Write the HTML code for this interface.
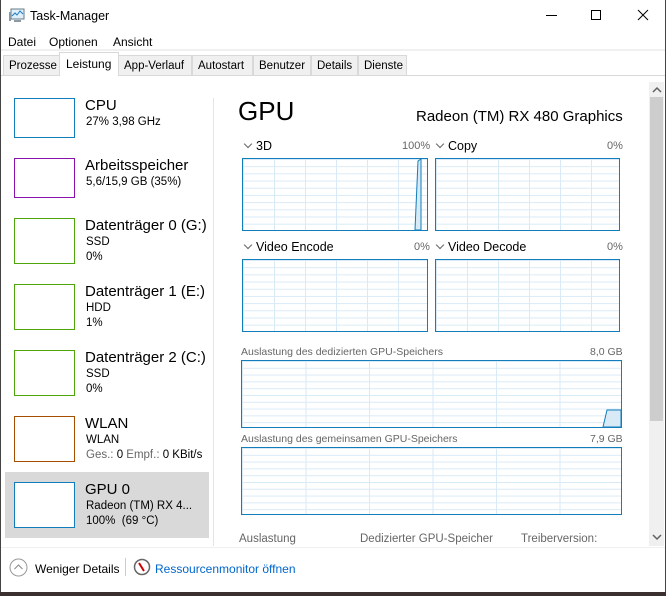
<!DOCTYPE html>
<html><head><meta charset="utf-8"><style>
*{margin:0;padding:0;box-sizing:border-box}
body{width:666px;height:596px;background:#fff;font-family:"Liberation Sans",sans-serif;font-size:12px;color:#000;position:relative;overflow:hidden}
.a{position:absolute;white-space:nowrap}
.tab{position:absolute;top:55px;height:20px;background:#f0f0f0;border:1px solid #d9d9d9;border-bottom:none;font-size:11.5px;padding:4px 0 0 5px;overflow:hidden}
.th{position:absolute;left:14px;width:61px;height:40px;background:#fff}
.nm{font-size:15px;left:85px}
.sb{font-size:11.5px;left:86px}
.g{position:absolute;border:1px solid #117dbb;
background-color:#fff;
background-image:linear-gradient(#d9eaf7 1px,transparent 1px),linear-gradient(90deg,#d9eaf7 1px,transparent 1px)}
.lbl{font-size:12.5px}
.pct{font-size:11px;color:#666}
.chev{position:absolute;width:6px;height:6px;border-right:1px solid #666;border-bottom:1px solid #666;transform:rotate(45deg)}
</style></head><body>
<svg class="a" style="left:8px;top:8px" width="18" height="16" viewBox="0 0 18 16"><rect x="3" y="1" width="13" height="10" fill="#dff0fa" stroke="#6a7b86"/><polyline points="4,8 7,5 9,7 12,3 15,6" fill="none" stroke="#1e7bc1"/><rect x="1" y="4" width="2" height="9" fill="#8a9aa4"/><rect x="6" y="12" width="7" height="2" fill="#8a9aa4"/></svg>
<div class="a" style="left:30px;top:9px;font-size:12.5px">Task-Manager</div>
<div class="a" style="left:546px;top:15px;width:11px;height:1px;background:#000"></div>
<div class="a" style="left:591px;top:10px;width:10px;height:10px;border:1px solid #000"></div>
<svg class="a" style="left:637px;top:9px" width="12" height="12"><path d="M1 1L11 11M11 1L1 11" stroke="#000" stroke-width="1"/></svg>
<div class="a" style="left:8px;top:35px">Datei</div>
<div class="a" style="left:49px;top:35px">Optionen</div>
<div class="a" style="left:113px;top:35px">Ansicht</div>
<div class="a" style="left:0;top:49px;width:666px;height:2px;background:#f0f0f0"></div>
<div class="a" style="left:0;top:51px;width:666px;height:24px;background:#fff"></div>
<div class="tab" style="left:3px;width:57px">Prozesse</div>
<div class="tab" style="left:118px;width:74px">App-Verlauf</div>
<div class="tab" style="left:192px;width:61px">Autostart</div>
<div class="tab" style="left:253px;width:58px">Benutzer</div>
<div class="tab" style="left:311px;width:47px">Details</div>
<div class="tab" style="left:358px;width:49px">Dienste</div>
<div class="a" style="left:59px;top:52px;width:60px;height:24px;background:#fff;border:1px solid #d9d9d9;border-bottom:none;padding:4px 0 0 6px">Leistung</div>
<div class="a" style="left:0;top:75px;width:59px;height:1px;background:#d9d9d9"></div>
<div class="a" style="left:119px;top:75px;width:547px;height:1px;background:#d9d9d9"></div>
<div class="a" style="left:213px;top:98px;width:1px;height:448px;background:#e5e5e5"></div>
<div class="th" style="top:98px;border:1px solid #117dbb"></div>
<div class="a nm" style="top:97px">CPU</div>
<div class="a sb" style="top:116px">27% 3,98 GHz</div>
<div class="th" style="top:158px;border:1px solid #8b12ae"></div>
<div class="a nm" style="top:157px">Arbeitsspeicher</div>
<div class="a sb" style="top:176px">5,6/15,9 GB (35%)</div>
<div class="th" style="top:218px;height:46px;border:1px solid #4da60c"></div>
<div class="a nm" style="top:217px">Datenträger 0 (G:)</div>
<div class="a sb" style="top:236px">SSD</div><div class="a sb" style="top:251px">0%</div>
<div class="th" style="top:284px;height:46px;border:1px solid #4da60c"></div>
<div class="a nm" style="top:283px">Datenträger 1 (E:)</div>
<div class="a sb" style="top:302px">HDD</div><div class="a sb" style="top:317px">1%</div>
<div class="th" style="top:350px;height:46px;border:1px solid #4da60c"></div>
<div class="a nm" style="top:349px">Datenträger 2 (C:)</div>
<div class="a sb" style="top:368px">SSD</div><div class="a sb" style="top:383px">0%</div>
<div class="th" style="top:416px;height:46px;border:1px solid #a74f01"></div>
<div class="a nm" style="top:415px">WLAN</div>
<div class="a sb" style="top:434px">WLAN</div>
<div class="a sb" style="top:449px;color:#666">Ges.: <span style="color:#000">0</span> Empf.: <span style="color:#000">0 KBit/s</span></div>
<div class="a" style="left:5px;top:472px;width:204px;height:66px;background:#d9d9d9"></div>
<div class="th" style="top:482px;height:46px;border:1px solid #117dbb"></div>
<div class="a nm" style="top:481px">GPU 0</div>
<div class="a sb" style="top:500px">Radeon (TM) RX 4...</div>
<div class="a sb" style="top:515px">100%&nbsp; (69 °C)</div>
<div class="a" style="left:238px;top:96px;font-size:26px">GPU</div>
<div class="a" style="left:416px;top:108px;font-size:15px">Radeon (TM) RX 480 Graphics</div>
<div class="chev" style="left:245px;top:141px"></div>
<div class="a lbl" style="left:256px;top:139px">3D</div>
<div class="a pct" style="left:402px;top:140px">100%</div>
<div class="chev" style="left:437px;top:141px"></div>
<div class="a lbl" style="left:448px;top:139px">Copy</div>
<div class="a pct" style="left:607px;top:140px">0%</div>
<div class="g" style="left:242px;top:158px;width:186px;height:73px;background-size:31px 7.2px"></div>
<svg class="a" style="left:242px;top:158px" width="186" height="73"><path d="M173 72L176 3L179 1L179 72Z" fill="#d9eaf7" stroke="#117dbb"/></svg>
<div class="g" style="left:435px;top:158px;width:185px;height:73px;background-size:31px 7.2px"></div>
<div class="chev" style="left:245px;top:242px"></div>
<div class="a lbl" style="left:256px;top:240px">Video Encode</div>
<div class="a pct" style="left:414px;top:241px">0%</div>
<div class="chev" style="left:437px;top:242px"></div>
<div class="a lbl" style="left:448px;top:240px">Video Decode</div>
<div class="a pct" style="left:607px;top:241px">0%</div>
<div class="g" style="left:242px;top:259px;width:186px;height:73px;background-size:31px 7.2px"></div>
<div class="g" style="left:435px;top:259px;width:185px;height:73px;background-size:31px 7.2px"></div>
<div class="a" style="left:241px;top:346px;font-size:10.5px;color:#666">Auslastung des dedizierten GPU-Speichers</div>
<div class="a" style="left:590px;top:346px;font-size:10.5px;color:#666">8,0 GB</div>
<div class="g" style="left:241px;top:360px;width:381px;height:68px;background-size:63.5px 6.8px"></div>
<svg class="a" style="left:241px;top:360px" width="381" height="68"><path d="M362 67L366 50L380 50L380 67Z" fill="#d9eaf7" stroke="#117dbb"/></svg>
<div class="a" style="left:241px;top:433px;font-size:10.5px;color:#666">Auslastung des gemeinsamen GPU-Speichers</div>
<div class="a" style="left:590px;top:433px;font-size:10.5px;color:#666">7,9 GB</div>
<div class="g" style="left:241px;top:447px;width:381px;height:68px;background-size:63.5px 6.8px"></div>
<div class="a" style="left:239px;top:533px;font-size:11.5px;color:#666">Auslastung</div>
<div class="a" style="left:360px;top:533px;font-size:11.5px;color:#666">Dedizierter GPU-Speicher</div>
<div class="a" style="left:521px;top:533px;font-size:11.5px;color:#666">Treiberversion:</div>
<div class="a" style="left:649px;top:82px;width:15px;height:464px;background:#f0f0f0"></div>
<div class="a" style="left:650px;top:97px;width:13px;height:324px;background:#cdcdcd"></div>
<svg class="a" style="left:651px;top:85px" width="12" height="10"><path d="M2 7L6 3L10 7" stroke="#606060" stroke-width="1.5" fill="none"/></svg>
<svg class="a" style="left:651px;top:532px" width="12" height="10"><path d="M2 3L6 7L10 3" stroke="#606060" stroke-width="1.5" fill="none"/></svg>
<div class="a" style="left:0;top:547px;width:666px;height:1px;background:#f0f0f0"></div>
<svg class="a" style="left:9px;top:558px" width="19" height="19"><circle cx="9.5" cy="9.5" r="8.5" fill="none" stroke="#999"/><path d="M5.5 11L9.5 7L13.5 11" stroke="#888" fill="none"/></svg>
<div class="a" style="left:35px;top:562px">Weniger Details</div>
<div class="a" style="left:125px;top:558px;width:1px;height:18px;background:#ccc"></div>
<svg class="a" style="left:133px;top:558px" width="18" height="18"><circle cx="9" cy="9" r="7.5" fill="#fff" stroke="#666" stroke-width="1.5"/><path d="M6 5L11 13" stroke="#c00" stroke-width="2"/></svg>
<div class="a" style="left:155px;top:562px;color:#0066cc">Ressourcenmonitor öffnen</div>
<div class="a" style="left:0;top:0;width:1px;height:596px;background:#444"></div>
<div class="a" style="left:665px;top:0;width:1px;height:596px;background:#444"></div>
<div class="a" style="left:0;top:592px;width:666px;height:4px;background:#3a3030"></div>
</body></html>
